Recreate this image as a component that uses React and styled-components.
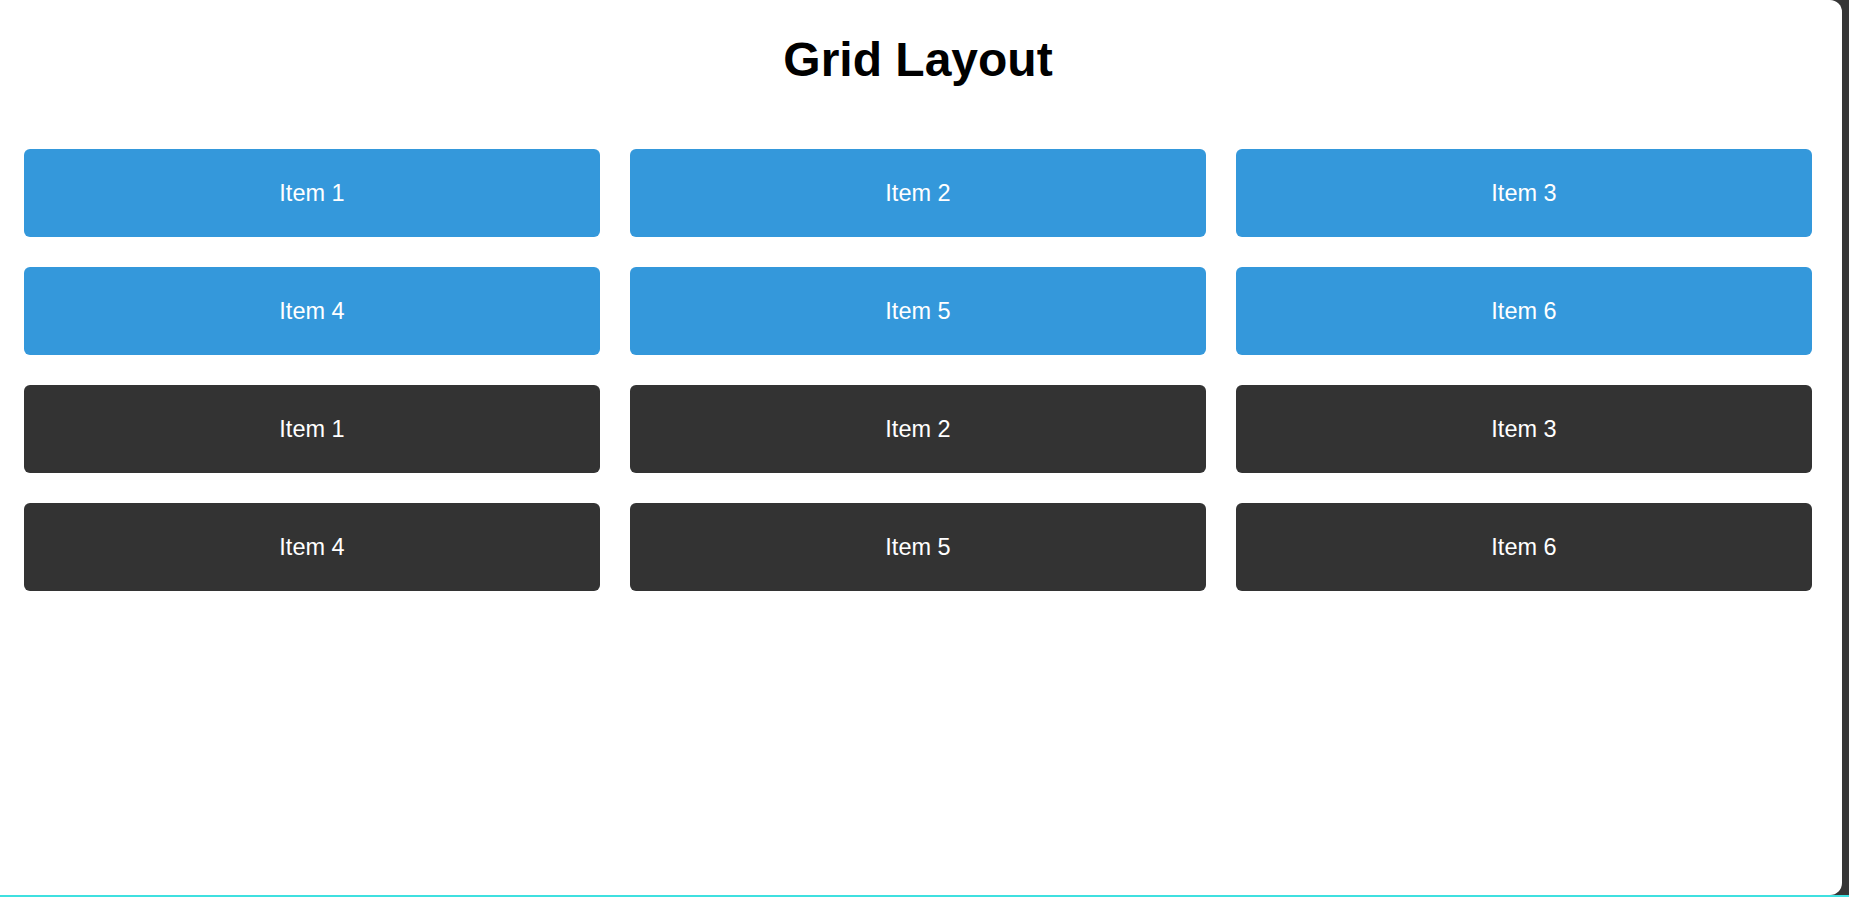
import styled, { createGlobalStyle } from 'styled-components';

const GlobalStyle = createGlobalStyle`
  html, body {
    margin: 0;
    padding: 0;
    height: 100%;
  }
  body {
    font-family: "Liberation Sans", Arial, sans-serif;
    background: #3a3a3a;
  }
`;

const items = ['Item 1', 'Item 2', 'Item 3', 'Item 4', 'Item 5', 'Item 6'];

const Frame = styled.div`
  display: flex;
  height: 895px;
  background: #363636;
  border-bottom: 2px solid #3fe0e0;
`;

const Panel = styled.div`
  flex: 1;
  background: #fff;
  border-radius: 0 12px 12px 0;
  padding: 32px 30px 0 24px;
`;

const Strip = styled.div`
  width: 7px;
`;

const Title = styled.h1`
  margin: 0 0 62px;
  text-align: center;
  font-size: 48px;
  font-weight: bold;
  color: #000;
`;

const Grid = styled.div`
  display: grid;
  grid-template-columns: repeat(3, 1fr);
  gap: 30px;
  margin-bottom: 30px;
`;

const Item = styled.div`
  height: 88px;
  display: flex;
  align-items: center;
  justify-content: center;
  border-radius: 6px;
  background: ${(props) => (props.dark ? '#333333' : '#3498db')};
  color: #fff;
  font-size: 23.5px;
`;

export default function App() {
  return (
    <>
      <GlobalStyle />
      <Frame>
        <Panel>
          <Title>Grid Layout</Title>
          <Grid>
            {items.map((item) => (
              <Item key={item}>{item}</Item>
            ))}
          </Grid>
          <Grid>
            {items.map((item) => (
              <Item key={item} dark>
                {item}
              </Item>
            ))}
          </Grid>
        </Panel>
        <Strip />
      </Frame>
    </>
  );
}
